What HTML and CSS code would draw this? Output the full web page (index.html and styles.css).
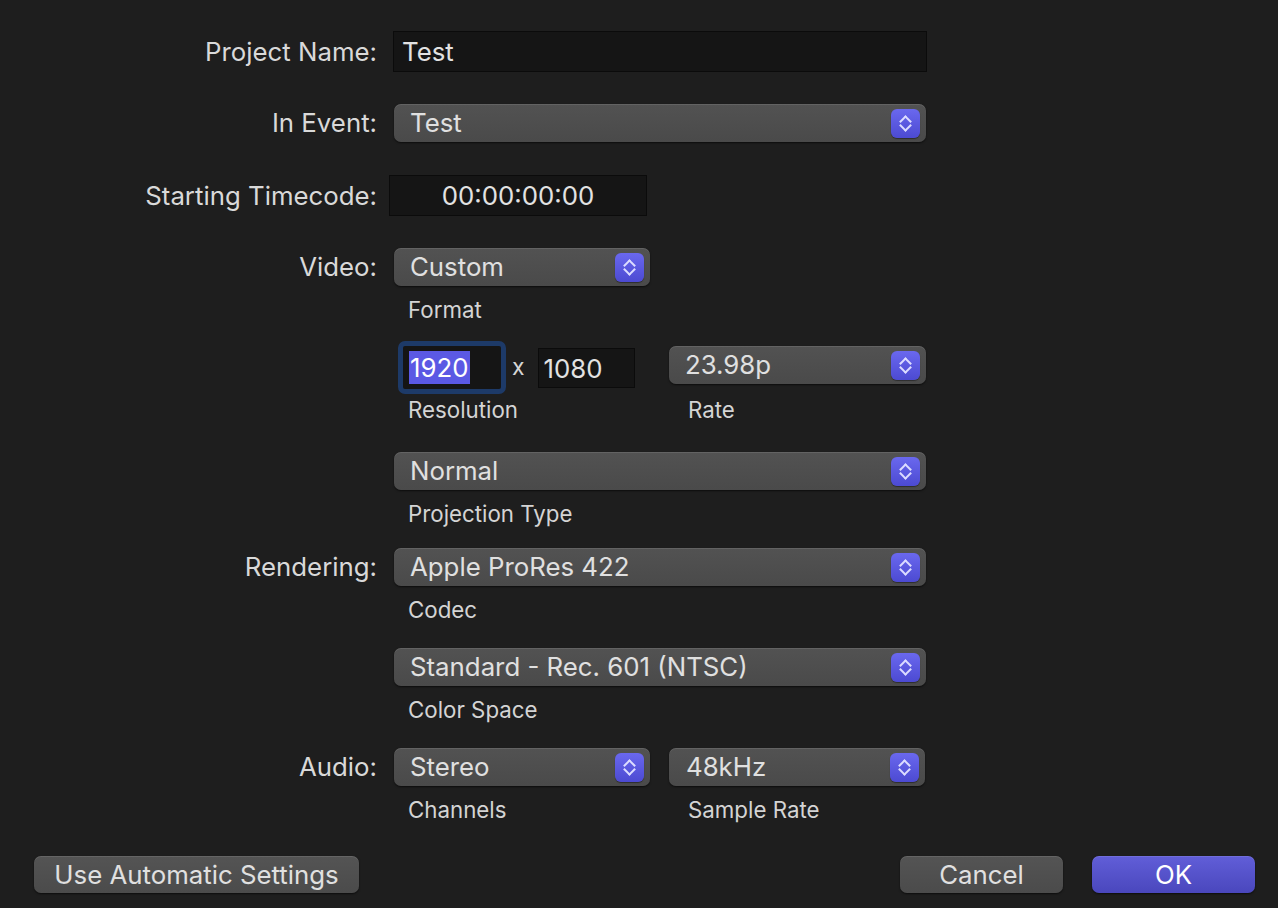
FILE: index.html
```html
<!DOCTYPE html>
<html>
<head>
<meta charset="utf-8">
<link rel="stylesheet" href="styles.css">
</head>
<body>
<div class="dialog">
  <div class="row r1">
    <div class="label lh41">Project Name:</div>
    <div class="control">
      <div class="field name">Test</div>
    </div>
  </div>

  <div class="row r2">
    <div class="label lh38">In Event:</div>
    <div class="control">
      <div class="popup wide"><span>Test</span><i class="chev"></i></div>
    </div>
  </div>

  <div class="row r3">
    <div class="label lh41">Starting Timecode:</div>
    <div class="control">
      <div class="field timecode">00:00:00:00</div>
    </div>
  </div>

  <div class="row r4">
    <div class="label lh38">Video:</div>
    <div class="control">
      <div class="popup half"><span>Custom</span><i class="chev"></i></div>
      <div class="sub">Format</div>
    </div>
  </div>

  <div class="row r5">
    <div class="label"></div>
    <div class="control">
      <div class="pair">
        <div class="res">
          <div class="ring"><div class="resfield"><span class="sel">1920</span></div></div>
          <span class="times">x</span>
          <div class="field small">1080</div>
        </div>
        <div class="ratecell">
          <div class="popup half"><span>23.98p</span><i class="chev"></i></div>
        </div>
      </div>
      <div class="pair subs">
        <div class="sub">Resolution</div>
        <div class="sub">Rate</div>
      </div>
    </div>
  </div>

  <div class="row r6">
    <div class="label"></div>
    <div class="control">
      <div class="popup wide"><span>Normal</span><i class="chev"></i></div>
      <div class="sub">Projection Type</div>
    </div>
  </div>

  <div class="row r7">
    <div class="label lh38">Rendering:</div>
    <div class="control">
      <div class="popup wide"><span>Apple ProRes 422</span><i class="chev"></i></div>
      <div class="sub">Codec</div>
    </div>
  </div>

  <div class="row r8">
    <div class="label"></div>
    <div class="control">
      <div class="popup wide"><span>Standard - Rec. 601 (NTSC)</span><i class="chev"></i></div>
      <div class="sub">Color Space</div>
    </div>
  </div>

  <div class="row r9">
    <div class="label lh38">Audio:</div>
    <div class="control">
      <div class="pair">
        <div class="popup half"><span>Stereo</span><i class="chev"></i></div>
        <div class="popup half"><span>48kHz</span><i class="chev"></i></div>
      </div>
      <div class="pair">
        <div class="sub">Channels</div>
        <div class="sub">Sample Rate</div>
      </div>
    </div>
  </div>

  <div class="footer">
    <button class="btn auto">Use Automatic Settings</button>
    <div class="right">
      <button class="btn cancel">Cancel</button>
      <button class="btn ok">OK</button>
    </div>
  </div>
</div>
</body>
</html>
```

FILE: styles.css
```css
html, body {
  margin: 0;
  padding: 0;
  background: #1e1e1e;
  width: 1278px;
  height: 908px;
  overflow: hidden;
}

.dialog {
  padding-top: 31px;
  font-family: "Inter", "Liberation Sans", sans-serif;
  color: #dcdcdc;
  -webkit-font-smoothing: antialiased;
}

.row {
  display: flex;
  align-items: flex-start;
}

.label {
  width: 377px;
  flex: none;
  text-align: right;
  font-size: 25.8px;
  color: #d9d9d9;
  white-space: nowrap;
}
.lh41 { line-height: 41px; }
.lh38 { line-height: 38px; }

.control {
  margin-left: 17px;
  display: flex;
  flex-direction: column;
}

.r2 { margin-top: 32px; }
.r3 { margin-top: 33px; }
.r4 { margin-top: 32px; }
.r5 { margin-top: 17px; }
.r6 { margin-top: 28px; }
.r7 { margin-top: 20px; }
.r8 { margin-top: 24px; }
.r9 { margin-top: 24px; }

.field {
  box-sizing: border-box;
  background: #151515;
  border: 1px solid #0b0b0b;
  height: 41px;
  line-height: 40px;
  font-size: 25.8px;
  color: #e2e2e2;
}
.field.name {
  width: 534px;
  margin-left: -1px;
  padding-left: 8px;
}
.field.timecode {
  width: 258px;
  margin-left: -5px;
  text-align: center;
}
.field.small {
  width: 97px;
  height: 40px;
  line-height: 39px;
  padding-left: 5px;
}

.popup {
  box-sizing: border-box;
  position: relative;
  height: 38px;
  border-radius: 7px;
  background: linear-gradient(#525252, #4a4a4a);
  box-shadow: inset 0 1px 0 rgba(255,255,255,0.10), 0 1px 2px rgba(0,0,0,0.6);
  padding-left: 16px;
  line-height: 37px;
  font-size: 25.8px;
  color: #e0e0e0;
  white-space: nowrap;
}
.popup.wide { width: 532px; }
.popup.half { width: 256px; }
.ratecell .popup.half { width: 257px; margin-top: -5px; }
.pair .popup.half + .popup.half { padding-left: 17px; }

.chev {
  position: absolute;
  right: 6px;
  top: 5px;
  width: 29px;
  height: 29px;
  border-radius: 6px;
  background: linear-gradient(#6a68ee, #4c4ad2);
  box-shadow: 0 1px 1px rgba(0,0,0,0.4);
}
.chev::before,
.chev::after {
  content: "";
  position: absolute;
  left: 10px;
  width: 7px;
  height: 7px;
  border-left: 2.5px solid #dcdcff;
  border-top: 2.5px solid #dcdcff;
}
.chev::before {
  top: 8px;
  transform: rotate(45deg);
}
.chev::after {
  top: 12px;
  transform: rotate(225deg);
}

.sub {
  margin-top: 10px;
  padding-left: 14px;
  line-height: 28px;
  font-size: 22.3px;
  color: #d4d4d4;
  white-space: nowrap;
}
.pair .sub + .sub { padding-left: 19px; }

.pair {
  display: grid;
  grid-template-columns: 256px 257px;
  column-gap: 19px;
  align-items: center;
}
.pair.subs .sub { margin-top: 2px; }

.res {
  display: flex;
  align-items: center;
  height: 53px;
}
.ring {
  margin-left: 4px;
  box-sizing: border-box;
  width: 108px;
  height: 53px;
  border: 5px solid #1d3a68;
  border-radius: 7px;
  background: #1d3a68;
}
.resfield {
  height: 100%;
  background: #151515;
  border-radius: 2px;
  display: flex;
  align-items: center;
  padding-left: 6px;
}
.sel {
  background: #5b59e4;
  color: #ffffff;
  font-size: 25.8px;
  line-height: 33px;
  padding: 0 1px;
}
.times {
  margin-left: 6px;
  margin-right: 13px;
  font-size: 23px;
  color: #d6d6d6;
  margin-top: -2px;
}

.footer {
  margin-top: 32px;
  display: flex;
  justify-content: space-between;
  padding-left: 34px;
  padding-right: 23px;
}
.footer .right {
  display: flex;
  gap: 29px;
}
.btn {
  height: 37px;
  border: none;
  border-radius: 7px;
  background: linear-gradient(#545454, #4b4b4b);
  box-shadow: inset 0 1px 0 rgba(255,255,255,0.10), 0 1px 2px rgba(0,0,0,0.6);
  color: #e0e0e0;
  font-family: "Inter", "Liberation Sans", sans-serif;
  font-size: 25.8px;
  padding: 0;
  line-height: 37px;
}
.btn.auto { width: 325px; }
.btn.cancel { width: 163px; }
.btn.ok {
  width: 163px;
  background: linear-gradient(#615ed8, #4a47bd);
  color: #ffffff;
}
```
